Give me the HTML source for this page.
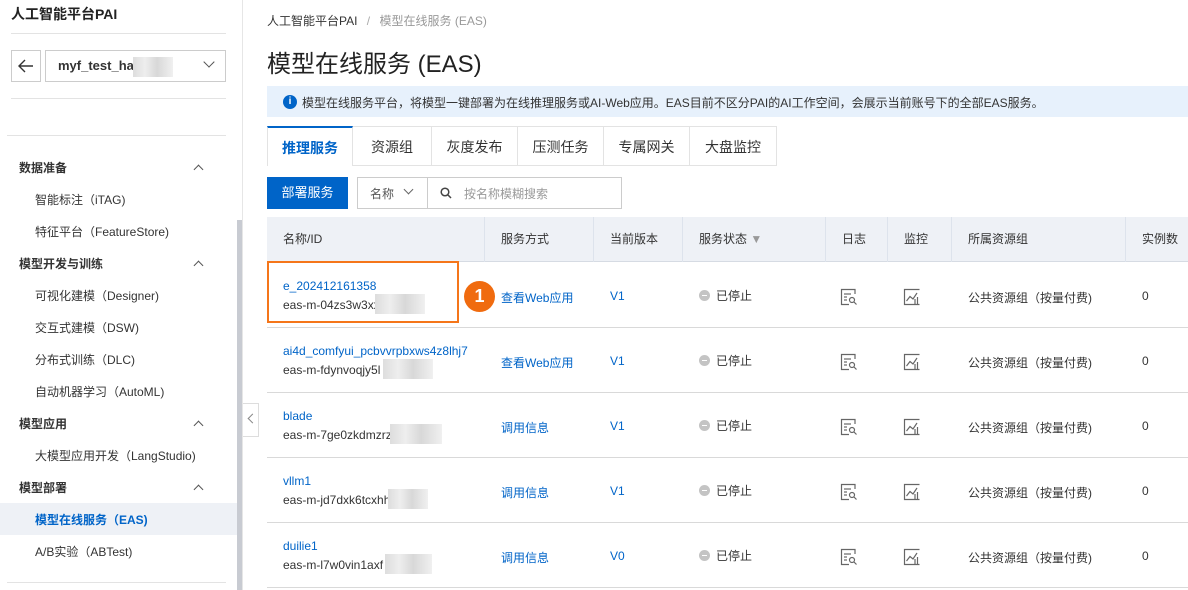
<!DOCTYPE html>
<html><head><meta charset="utf-8"><style>
*{box-sizing:border-box;margin:0;padding:0}
body{width:1188px;height:590px;overflow:hidden;background:#fff;font-family:"Liberation Sans","Noto Sans CJK SC",sans-serif;font-size:12px;color:#333;position:relative}
.a{position:absolute;white-space:nowrap}
.hl{position:absolute;height:1px;background:#e3e3e3}
.grp{position:absolute;left:19px;font-weight:bold;font-size:12px;color:#333}
.it{position:absolute;left:35px;font-size:12px;color:#333}
.car{position:absolute;left:195px;width:7px;height:7px;border-left:1.5px solid #555;border-top:1.5px solid #555;transform:rotate(45deg)}
.tab{position:absolute;top:126px;height:40px;border:1px solid #e3e3e3;border-left:none;text-align:center;line-height:40px;font-size:14px;color:#333}
.th{position:absolute;top:217px;height:45px;line-height:45px;font-size:12px;color:#333}
.vl{position:absolute;top:217px;height:45px;width:1px;background:#dde3ec}
.row{position:absolute;left:267px;width:921px;height:1px;background:#d9d9d9}
.blue{color:#0064c8}
.dot{display:inline-block;width:11px;height:11px;border-radius:50%;background:#c4c4c4;vertical-align:-1px;margin-right:6px;position:relative}
.dot:after{content:"";position:absolute;left:3px;top:5px;width:5px;height:1px;background:#fff}
.blur{position:absolute;height:20px;background:linear-gradient(90deg,#ddd,#eee 30%,#d8d8d8 60%,#f0f0f0)}
</style></head><body>
<div class="a" style="left:11px;top:4px;font-size:14px;font-weight:bold;color:#222">人工智能平台PAI</div>
<div class="hl" style="left:11px;top:33px;width:215px"></div>
<div class="a" style="left:11px;top:50px;width:30px;height:32px;border:1px solid #ccc"></div>
<svg class="a" style="left:17px;top:58px" width="18" height="16"><path d="M16 8H2M8 2L2 8L8 14" fill="none" stroke="#333" stroke-width="1.4"/></svg>
<div class="a" style="left:45px;top:50px;width:181px;height:32px;border:1px solid #ccc"></div>
<div class="a" style="left:58px;top:58px;font-weight:bold;font-size:13px;color:#333">myf_test_ha</div>
<div class="blur" style="left:133px;top:57px;width:40px"></div>
<div class="a" style="left:205px;top:58px;width:8px;height:8px;border-right:1.5px solid #555;border-bottom:1.5px solid #555;transform:rotate(45deg)"></div>
<div class="hl" style="left:11px;top:98px;width:215px"></div>
<div class="hl" style="left:7px;top:135px;width:219px"></div>
<div class="grp" style="top:159px">数据准备</div><div class="car" style="top:166px"></div>
<div class="it" style="top:191px">智能标注（iTAG)</div>
<div class="it" style="top:223px">特征平台（FeatureStore)</div>
<div class="grp" style="top:255px">模型开发与训练</div><div class="car" style="top:262px"></div>
<div class="it" style="top:287px">可视化建模（Designer)</div>
<div class="it" style="top:319px">交互式建模（DSW)</div>
<div class="it" style="top:351px">分布式训练（DLC)</div>
<div class="it" style="top:383px">自动机器学习（AutoML)</div>
<div class="grp" style="top:415px">模型应用</div><div class="car" style="top:422px"></div>
<div class="it" style="top:447px">大模型应用开发（LangStudio)</div>
<div class="grp" style="top:479px">模型部署</div><div class="car" style="top:486px"></div>
<div class="a" style="left:0;top:503px;width:238px;height:32px;background:#eef1f6"></div>
<div class="it" style="top:511px;color:#0064c8;font-weight:bold">模型在线服务（EAS)</div>
<div class="it" style="top:543px">A/B实验（ABTest)</div>
<div class="hl" style="left:7px;top:582px;width:219px"></div>
<div class="a" style="left:237px;top:220px;width:5px;height:370px;background:#c8cbd2"></div>
<div class="a" style="left:242px;top:0;width:1px;height:590px;background:#e6e6e6"></div>
<div class="a" style="left:243px;top:403px;width:16px;height:34px;border:1px solid #ddd;border-left:none;background:#fff"></div>
<div class="a" style="left:249px;top:415px;width:7px;height:7px;border-left:1.5px solid #888;border-bottom:1.5px solid #888;transform:rotate(45deg)"></div>
<div class="a" style="left:267px;top:12px;font-size:12px;color:#333">人工智能平台PAI <span style="color:#aaa;margin:0 6px">/</span> <span style="color:#999">模型在线服务 (EAS)</span></div>
<div class="a" style="left:267px;top:44px;font-size:24px;color:#222">模型在线服务 (EAS)</div>
<div class="a" style="left:267px;top:86px;width:921px;height:31px;background:#e7f1fc"></div>
<div class="a" style="left:283px;top:95px;width:14px;height:14px;border-radius:50%;background:#0064c8;color:#fff;font-size:10px;font-weight:bold;text-align:center;line-height:14px">i</div>
<div class="a" style="left:302px;top:94px;font-size:12px;color:#333">模型在线服务平台，将模型一键部署为在线推理服务或AI-Web应用。EAS目前不区分PAI的AI工作空间，会展示当前账号下的全部EAS服务。</div>
<div class="tab" style="left:267px;width:86px;border-left:1px solid #e3e3e3;border-top:2px solid #0064c8;border-bottom:none;color:#0064c8;font-weight:bold">推理服务</div>
<div class="tab" style="left:353px;width:79px">资源组</div>
<div class="tab" style="left:432px;width:86px">灰度发布</div>
<div class="tab" style="left:518px;width:86px">压测任务</div>
<div class="tab" style="left:604px;width:86px">专属网关</div>
<div class="tab" style="left:690px;width:87px">大盘监控</div>
<div class="a" style="left:267px;top:177px;width:81px;height:32px;background:#0064c8;color:#fff;font-size:13px;text-align:center;line-height:32px">部署服务</div>
<div class="a" style="left:357px;top:177px;width:265px;height:32px;border:1px solid #ccc"></div>
<div class="a" style="left:427px;top:177px;width:1px;height:32px;background:#ccc"></div>
<div class="a" style="left:370px;top:185px;color:#555">名称</div>
<div class="a" style="left:405px;top:186px;width:7px;height:7px;border-right:1.5px solid #666;border-bottom:1.5px solid #666;transform:rotate(45deg)"></div>
<svg class="a" style="left:440px;top:187px" width="12" height="12"><circle cx="5" cy="5" r="3.8" fill="none" stroke="#444" stroke-width="1.5"/><line x1="8" y1="8" x2="11" y2="11" stroke="#444" stroke-width="1.5"/></svg>
<div class="a" style="left:464px;top:185px;color:#999">按名称模糊搜索</div>
<div class="a" style="left:267px;top:217px;width:921px;height:45px;background:#eef1f6;border-bottom:1px solid #d6dbe3"></div>
<div class="th" style="left:283px">名称/ID</div>
<div class="th" style="left:501px">服务方式</div>
<div class="th" style="left:610px">当前版本</div>
<div class="th" style="left:699px">服务状态 <span style="color:#999">▼</span></div>
<div class="th" style="left:842px">日志</div>
<div class="th" style="left:904px">监控</div>
<div class="th" style="left:968px">所属资源组</div>
<div class="th" style="left:1142px">实例数</div>
<div class="vl" style="left:484px"></div><div class="vl" style="left:593px"></div><div class="vl" style="left:682px"></div><div class="vl" style="left:825px"></div><div class="vl" style="left:887px"></div><div class="vl" style="left:951px"></div><div class="vl" style="left:1125px"></div>
<div class="row" style="top:327px"></div><div class="row" style="top:392px"></div><div class="row" style="top:457px"></div><div class="row" style="top:522px"></div><div class="row" style="top:587px"></div>

<div class="a blue" style="left:283px;top:279px">e_202412161358</div><div class="a" style="left:283px;top:298px">eas-m-04zs3w3xx</div><div class="blur" style="left:375px;top:294px;width:50px"></div>
<div class="a" style="left:267px;top:261px;width:192px;height:62px;border:2px solid #f5761a"></div>
<div class="a" style="left:464px;top:281px;width:31px;height:31px;border-radius:50%;background:#f06b0f;color:#fff;font-weight:bold;font-size:18px;text-align:center;line-height:31px">1</div>

<div class="a blue" style="left:283px;top:344px">ai4d_comfyui_pcbvvrpbxws4z8lhj7</div><div class="a" style="left:283px;top:363px">eas-m-fdynvoqjy5l</div><div class="blur" style="left:383px;top:359px;width:50px"></div>
<div class="a blue" style="left:283px;top:409px">blade</div><div class="a" style="left:283px;top:428px">eas-m-7ge0zkdmzrz</div><div class="blur" style="left:390px;top:424px;width:52px"></div>
<div class="a blue" style="left:283px;top:474px">vllm1</div><div class="a" style="left:283px;top:493px">eas-m-jd7dxk6tcxhh</div><div class="blur" style="left:388px;top:489px;width:40px"></div>
<div class="a blue" style="left:283px;top:539px">duilie1</div><div class="a" style="left:283px;top:558px">eas-m-l7w0vin1axf</div><div class="blur" style="left:385px;top:554px;width:47px"></div>

<div class="a blue" style="left:501px;top:289px">查看Web应用</div>
<div class="a blue" style="left:501px;top:354px">查看Web应用</div>
<div class="a blue" style="left:501px;top:419px">调用信息</div>
<div class="a blue" style="left:501px;top:484px">调用信息</div>
<div class="a blue" style="left:501px;top:549px">调用信息</div>

<div class="a blue" style="left:610px;top:289px">V1</div><div class="a blue" style="left:610px;top:354px">V1</div><div class="a blue" style="left:610px;top:419px">V1</div><div class="a blue" style="left:610px;top:484px">V1</div><div class="a blue" style="left:610px;top:549px">V0</div>

<div class="a" style="left:699px;top:287px"><span class="dot"></span>已停止</div>
<div class="a" style="left:699px;top:352px"><span class="dot"></span>已停止</div>
<div class="a" style="left:699px;top:417px"><span class="dot"></span>已停止</div>
<div class="a" style="left:699px;top:482px"><span class="dot"></span>已停止</div>
<div class="a" style="left:699px;top:547px"><span class="dot"></span>已停止</div>

<svg class="a" style="left:840px;top:288px" width="18" height="18"><g fill="none" stroke="#666" stroke-width="1.2"><path d="M15 6V1.5H1.5V16.5H9"/><line x1="4" y1="6" x2="11" y2="6"/><line x1="4" y1="9" x2="7" y2="9"/><line x1="4" y1="12" x2="7" y2="12"/><circle cx="12" cy="12" r="2.5"/><line x1="14" y1="14" x2="16.5" y2="16.5"/></g></svg>
<svg class="a" style="left:903px;top:288px" width="18" height="18"><g fill="none" stroke="#666" stroke-width="1.2"><path d="M16.5 1.5H1.5V16.5H16.5"/><path d="M3.5 13L7 8.5L10 11L14 5"/><line x1="12" y1="11" x2="12" y2="16"/><line x1="14.5" y1="9" x2="14.5" y2="16"/></g></svg>
<div class="a" style="left:968px;top:289px">公共资源组（按量付费)</div>
<div class="a" style="left:1142px;top:289px">0</div>

<svg class="a" style="left:840px;top:353px" width="18" height="18"><g fill="none" stroke="#666" stroke-width="1.2"><path d="M15 6V1.5H1.5V16.5H9"/><line x1="4" y1="6" x2="11" y2="6"/><line x1="4" y1="9" x2="7" y2="9"/><line x1="4" y1="12" x2="7" y2="12"/><circle cx="12" cy="12" r="2.5"/><line x1="14" y1="14" x2="16.5" y2="16.5"/></g></svg>
<svg class="a" style="left:903px;top:353px" width="18" height="18"><g fill="none" stroke="#666" stroke-width="1.2"><path d="M16.5 1.5H1.5V16.5H16.5"/><path d="M3.5 13L7 8.5L10 11L14 5"/><line x1="12" y1="11" x2="12" y2="16"/><line x1="14.5" y1="9" x2="14.5" y2="16"/></g></svg>
<div class="a" style="left:968px;top:354px">公共资源组（按量付费)</div>
<div class="a" style="left:1142px;top:354px">0</div>

<svg class="a" style="left:840px;top:418px" width="18" height="18"><g fill="none" stroke="#666" stroke-width="1.2"><path d="M15 6V1.5H1.5V16.5H9"/><line x1="4" y1="6" x2="11" y2="6"/><line x1="4" y1="9" x2="7" y2="9"/><line x1="4" y1="12" x2="7" y2="12"/><circle cx="12" cy="12" r="2.5"/><line x1="14" y1="14" x2="16.5" y2="16.5"/></g></svg>
<svg class="a" style="left:903px;top:418px" width="18" height="18"><g fill="none" stroke="#666" stroke-width="1.2"><path d="M16.5 1.5H1.5V16.5H16.5"/><path d="M3.5 13L7 8.5L10 11L14 5"/><line x1="12" y1="11" x2="12" y2="16"/><line x1="14.5" y1="9" x2="14.5" y2="16"/></g></svg>
<div class="a" style="left:968px;top:419px">公共资源组（按量付费)</div>
<div class="a" style="left:1142px;top:419px">0</div>

<svg class="a" style="left:840px;top:483px" width="18" height="18"><g fill="none" stroke="#666" stroke-width="1.2"><path d="M15 6V1.5H1.5V16.5H9"/><line x1="4" y1="6" x2="11" y2="6"/><line x1="4" y1="9" x2="7" y2="9"/><line x1="4" y1="12" x2="7" y2="12"/><circle cx="12" cy="12" r="2.5"/><line x1="14" y1="14" x2="16.5" y2="16.5"/></g></svg>
<svg class="a" style="left:903px;top:483px" width="18" height="18"><g fill="none" stroke="#666" stroke-width="1.2"><path d="M16.5 1.5H1.5V16.5H16.5"/><path d="M3.5 13L7 8.5L10 11L14 5"/><line x1="12" y1="11" x2="12" y2="16"/><line x1="14.5" y1="9" x2="14.5" y2="16"/></g></svg>
<div class="a" style="left:968px;top:484px">公共资源组（按量付费)</div>
<div class="a" style="left:1142px;top:484px">0</div>

<svg class="a" style="left:840px;top:548px" width="18" height="18"><g fill="none" stroke="#666" stroke-width="1.2"><path d="M15 6V1.5H1.5V16.5H9"/><line x1="4" y1="6" x2="11" y2="6"/><line x1="4" y1="9" x2="7" y2="9"/><line x1="4" y1="12" x2="7" y2="12"/><circle cx="12" cy="12" r="2.5"/><line x1="14" y1="14" x2="16.5" y2="16.5"/></g></svg>
<svg class="a" style="left:903px;top:548px" width="18" height="18"><g fill="none" stroke="#666" stroke-width="1.2"><path d="M16.5 1.5H1.5V16.5H16.5"/><path d="M3.5 13L7 8.5L10 11L14 5"/><line x1="12" y1="11" x2="12" y2="16"/><line x1="14.5" y1="9" x2="14.5" y2="16"/></g></svg>
<div class="a" style="left:968px;top:549px">公共资源组（按量付费)</div>
<div class="a" style="left:1142px;top:549px">0</div>
</body></html>
